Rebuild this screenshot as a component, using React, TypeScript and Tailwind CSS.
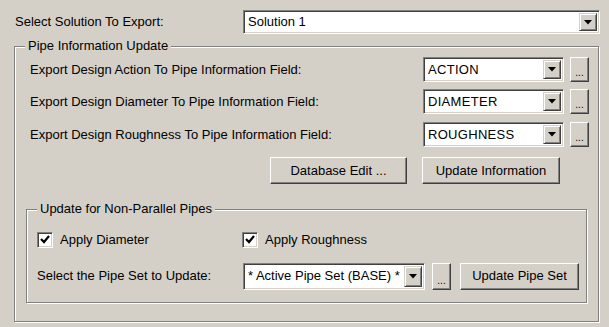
import React from "react";

const BG = "bg-[#d4d0c8]";

function DropBtn({ w = "w-[18px]" }: { w?: string }) {
  return (
    <div
      className={`${w} h-full ${BG} border-t border-l border-[#d4d0c8] border-r border-b border-r-[#404040] border-b-[#404040] shadow-[inset_1px_1px_0_#ffffff,inset_-1px_-1px_0_#808080] flex items-center justify-center`}
    >
      <svg width="8" height="5" viewBox="0 0 8 5">
        <polygon points="0,0 8,0 4,4.5" fill="#000" />
      </svg>
    </div>
  );
}

function Combo({
  text,
  w,
  h = "h-[25px]",
  upper = false,
}: {
  text: string;
  w: string;
  h?: string;
  upper?: boolean;
}) {
  return (
    <div
      className={`${w} ${h} bg-white border border-t-[#808080] border-l-[#808080] border-r-white border-b-white shadow-[inset_1px_1px_0_#404040,inset_-1px_-1px_0_#d4d0c8] flex items-stretch p-[2px]`}
    >
      <div
        className={`flex-1 flex items-center pl-[2px] whitespace-nowrap overflow-hidden ${
          upper ? "tracking-[0.3px]" : ""
        }`}
      >
        {text}
      </div>
      <DropBtn />
    </div>
  );
}

function Btn({
  children,
  w,
  h = "h-[27px]",
  className = "",
}: {
  children: React.ReactNode;
  w: string;
  h?: string;
  className?: string;
}) {
  return (
    <div
      className={`${w} ${h} ${BG} border border-t-white border-l-white border-r-[#404040] border-b-[#404040] shadow-[inset_-1px_-1px_0_#808080] flex items-center justify-center whitespace-nowrap ${className}`}
    >
      {children}
    </div>
  );
}

function Dots({ h = "h-[25px]" }: { h?: string }) {
  return (
    <Btn w="w-[19px]" h={h} className="items-end pb-[3px]">
      <span className="text-[10px] leading-none">...</span>
    </Btn>
  );
}

function Check({ label }: { label: string }) {
  return (
    <div className="flex items-center gap-[7px]">
      <div className="w-[16px] h-[16px] bg-white border border-t-[#808080] border-l-[#808080] border-r-white border-b-white shadow-[inset_1px_1px_0_#404040,inset_-1px_-1px_0_#d4d0c8] flex items-center justify-center">
        <svg width="10" height="9" viewBox="0 0 10 9">
          <polyline
            points="1,4 4,7 9,1"
            fill="none"
            stroke="#000"
            strokeWidth="2.2"
          />
        </svg>
      </div>
      <span>{label}</span>
    </div>
  );
}

function Group({
  title,
  className,
  children,
  titleLeft = "left-[10px]",
}: {
  title: string;
  className: string;
  children: React.ReactNode;
  titleLeft?: string;
}) {
  return (
    <div
      className={`relative border border-[#808080] shadow-[inset_1px_1px_0_#ffffff,1px_1px_0_#ffffff] ${className}`}
    >
      <div
        className={`absolute -top-[9px] ${titleLeft} ${BG} px-[3px] leading-[16px]`}
      >
        {title}
      </div>
      {children}
    </div>
  );
}

export default function App() {
  return (
    <div
      className={`w-[609px] h-[327px] ${BG} text-black text-[13px] overflow-hidden pt-[10px] relative`}
      style={{ fontFamily: '"Liberation Sans", Arial, sans-serif' }}
    >
      <div className="flex items-center h-[24px] pl-[15px]">
        <div className="w-[228px]">Select Solution To Export:</div>
        <Combo text="Solution 1" w="w-[357px]" h="h-[24px]" />
      </div>

      <Group
        title="Pipe Information Update"
        className="mt-[12px] ml-[14px] w-[585px] h-[276px] pt-[10px]"
      >
        <div className="flex flex-col">
          {[
            ["Export Design Action To Pipe Information Field:", "ACTION"],
            ["Export Design Diameter To Pipe Information Field:", "DIAMETER"],
            ["Export Design Roughness To Pipe Information Field:", "ROUGHNESS"],
          ].map(([l, v], i) => (
            <div
              key={l}
              className={`flex items-center pl-[15px] ${
                i === 1 ? "mt-[7px]" : i === 2 ? "mt-[8px]" : ""
              }`}
            >
              <div className="w-[393px]">{l}</div>
              <Combo text={v} w="w-[141px]" upper />
              <div className="ml-[6px]">
                <Dots />
              </div>
            </div>
          ))}
          <div className="flex ml-[255px] mt-[10px] gap-[15px]">
            <Btn w="w-[137px]">Database Edit ...</Btn>
            <Btn w="w-[138px]">Update Information</Btn>
          </div>
        </div>

        <Group
          title="Update for Non-Parallel Pipes"
          className="mt-[25px] ml-[11px] w-[561px] h-[94px] pt-[20px] pl-[10px]"
        >
          <div className="flex">
            <div className="w-[205px]">
              <Check label="Apply Diameter" />
            </div>
            <Check label="Apply Roughness" />
          </div>
          <div className="flex items-center mt-[13px]">
            <div className="w-[206px]">Select the Pipe Set to Update:</div>
            <Combo text="* Active Pipe Set (BASE) *" w="w-[182px]" h="h-[27px]" />
            <div className="ml-[7px]">
              <Dots h="h-[27px]" />
            </div>
            <div className="ml-[9px]">
              <Btn w="w-[119px]">Update Pipe Set</Btn>
            </div>
          </div>
        </Group>
      </Group>
    </div>
  );
}
